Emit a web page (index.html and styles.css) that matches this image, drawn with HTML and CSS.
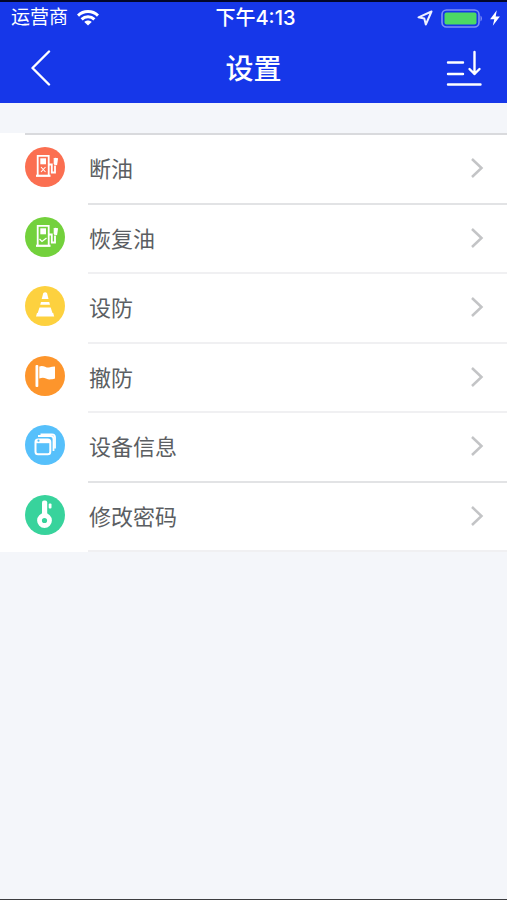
FILE: index.html
```html
<!DOCTYPE html>
<html lang="zh-CN">
<head>
<meta charset="utf-8">
<meta name="viewport" content="width=device-width, initial-scale=1">
<title>设置</title>
<link rel="stylesheet" href="styles.css">
</head>
<body>
<div class="screen">
  <header class="header">
    <div class="status">
      <div class="status-left">
        <span>运营商</span>
        <svg width="22" height="16" viewBox="0 0 22 16" fill="none" stroke="#fff" stroke-width="3" aria-hidden="true">
          <path d="M1 5.6C6.500 .2 15.500 .2 21 5.600"/>
          <path d="M4.600 9.400C8.200 5.900 13.800 5.900 17.400 9.400"/>
          <path d="M11 15.600L7.300 12C9.200 10 12.800 10 14.700 12Z" fill="#fff" stroke="none"/>
        </svg>
      </div>
      <span class="time">下午4:13</span>
      <div class="status-right">
        <svg width="16" height="16" viewBox="0 0 16 16" fill="none" stroke="#eef0ff" stroke-width="2" stroke-linejoin="round" aria-hidden="true"><path d="M14.500 1.500L1.500 7.300L7.300 8.600L8.800 14.500Z"/></svg>
        <svg width="41" height="19" viewBox="0 0 41 19" aria-hidden="true">
          <rect x="1" y="1" width="37" height="17" rx="4.500" fill="none" stroke="#7f8ff5" stroke-width="1.600"/>
          <rect x="3.500" y="3.500" width="32" height="12" rx="2" fill="#4cd964"/>
          <path d="M39.500 6.500Q41 7.500 41 9.500T39.500 12.500Z" fill="#7f8ff5"/>
        </svg>
        <svg width="10" height="16" viewBox="0 0 10 16" fill="#fff" aria-hidden="true"><path d="M6.800 .3L.1 9.300H4.300L2.800 15.700L9.900 6.400H5.700Z"/></svg>
      </div>
    </div>
    <div class="navbar">
      <button class="nav-button" type="button" aria-label="返回">
        <svg width="20" height="36" viewBox="0 0 20 36" fill="none" stroke="#fff" stroke-width="2.400" stroke-linecap="round" stroke-linejoin="round"><path d="M18 1.500L1.500 18L18 34.500"/></svg>
      </button>
      <h1 class="title">设置</h1>
      <button class="nav-button" type="button" aria-label="排序">
        <svg width="36" height="36" viewBox="0 0 36 36" fill="none" stroke="#fff" stroke-width="2.400" stroke-linecap="round" stroke-linejoin="round"><path d="M2 12.500H17M2 24H17M2 34.500H34.500M28.500 2V24M23.500 19L28.500 24L33.500 19"/></svg>
      </button>
    </div>
  </header>
  <main>
    <ul class="list">
      <li class="row"><a class="link" href="#">
        <svg class="icon" viewBox="0 0 40 40" aria-hidden="true">
          <circle cx="20" cy="20" r="20" fill="#fb6f51"/>
          <g fill="none" stroke="#fff" stroke-width="1.800"><path d="M12.700 28V8.800H23.700V28"/><path d="M11 28.800H25.500" stroke-width="2.200"/><path d="M24 17.500H26.800V25.500H30V18.500"/><path d="M29.300 11V17" stroke-width="1.200"/><path d="M31.500 11L30.500 18" stroke-width="3.200"/><path d="M16 20L20.500 25M20.500 20L16 25" stroke-width="1.100"/></g>
          <rect x="15.300" y="11.300" width="5.700" height="6" fill="#fff"/>
        </svg>
        <span class="label">断油</span>
        <svg class="chevron" viewBox="0 0 14 22" aria-hidden="true"><path d="M2 2L11.500 11L2 20"/></svg>
      </a></li>
      <li class="row"><a class="link" href="#">
        <svg class="icon" viewBox="0 0 40 40" aria-hidden="true">
          <circle cx="20" cy="20" r="20" fill="#73d13c"/>
          <g fill="none" stroke="#fff" stroke-width="1.800"><path d="M12.700 28V8.800H23.700V28"/><path d="M11 28.800H25.500" stroke-width="2.200"/><path d="M24 17.500H26.800V25.500H30V18.500"/><path d="M29.300 11V17" stroke-width="1.200"/><path d="M31.500 11L30.500 18" stroke-width="3.200"/><path d="M14.500 22L17 24.500L21.500 21" stroke-width="1.300"/></g>
          <rect x="15.300" y="11.300" width="5.700" height="6" fill="#fff"/>
        </svg>
        <span class="label">恢复油</span>
        <svg class="chevron" viewBox="0 0 14 22" aria-hidden="true"><path d="M2 2L11.500 11L2 20"/></svg>
      </a></li>
      <li class="row"><a class="link" href="#">
        <svg class="icon" viewBox="0 0 40 40" aria-hidden="true">
          <circle cx="20" cy="20" r="20" fill="#fdd13f"/>
          <g fill="#fff"><path d="M18.300 7Q20.200 5.600 22 7L23.500 13H16.700Z"/><path d="M16 16H24.200L25 18.700H15.200Z"/><path d="M14.500 21.500H25.700L27.500 27H12.700Z"/><path d="M12 27H28.200L29.200 30.500H11Z"/></g>
        </svg>
        <span class="label">设防</span>
        <svg class="chevron" viewBox="0 0 14 22" aria-hidden="true"><path d="M2 2L11.500 11L2 20"/></svg>
      </a></li>
      <li class="row"><a class="link" href="#">
        <svg class="icon" viewBox="0 0 40 40" aria-hidden="true">
          <circle cx="20" cy="20" r="20" fill="#fd952c"/>
          <g fill="#fff"><rect x="10.500" y="9" width="2.800" height="22" rx="1"/><path d="M14.300 10.500C18 8.500 21 12 24 11.500Q27 10.700 30 10.500V22.500C26 23.500 24 24 21 22.500Q18 21 14.300 22.500Z"/></g>
        </svg>
        <span class="label">撤防</span>
        <svg class="chevron" viewBox="0 0 14 22" aria-hidden="true"><path d="M2 2L11.500 11L2 20"/></svg>
      </a></li>
      <li class="row"><a class="link" href="#">
        <svg class="icon" viewBox="0 0 40 40" aria-hidden="true">
          <circle cx="20" cy="20" r="20" fill="#56c0fb"/>
          <g fill="none" stroke="#fff" stroke-width="2"><rect x="10.500" y="14.500" width="14.800" height="14.800" rx="2.500"/><path d="M10.500 16.500H25" stroke-width="3.400"/><path d="M13 11H25.500Q28.500 11 28.500 14V26" stroke-width="1.800"/><path d="M15.500 9.300H27Q30 9.300 30 12.300V23.500" stroke-width="1.800"/></g>
          <circle cx="13.500" cy="15.700" r="1.100" fill="#56c0fb"/>
        </svg>
        <span class="label">设备信息</span>
        <svg class="chevron" viewBox="0 0 14 22" aria-hidden="true"><path d="M2 2L11.500 11L2 20"/></svg>
      </a></li>
      <li class="row"><a class="link" href="#">
        <svg class="icon" viewBox="0 0 40 40" aria-hidden="true">
          <circle cx="20" cy="20" r="20" fill="#38d39c"/>
          <rect x="17" y="5.500" width="5.200" height="16" rx="2" fill="#fff"/><rect x="23.700" y="8.500" width="2.800" height="5" rx="1" fill="#fff"/>
          <circle cx="19.500" cy="25.500" r="5" fill="none" stroke="#fff" stroke-width="4.800"/>
        </svg>
        <span class="label">修改密码</span>
        <svg class="chevron" viewBox="0 0 14 22" aria-hidden="true"><path d="M2 2L11.500 11L2 20"/></svg>
      </a></li>
    </ul>
  </main>
</div>
</body>
</html>
```
FILE: styles.css
```css
* {
  box-sizing: border-box;
}

body {
  margin: 0;
  background: #f4f6fa;
  font-family: "Inter", "Noto Sans CJK SC", sans-serif;
}

.screen {
  min-height: 100vh;
  border-top: 2px solid #02062a;
  border-bottom: 1px solid #3c3d40;
}

.header {
  background: #1637e9;
  color: #fff;
}

.status {
  display: grid;
  grid-template-columns: 1fr auto 1fr;
  align-items: center;
  height: 32px;
  padding: 0 7px 0 11px;
  font-size: 19px;
  line-height: 32px;
}

.status-left,
.status-right {
  display: flex;
  align-items: center;
  gap: 9px;
}

.status-right {
  justify-content: flex-end;
  gap: 8px;
}

.time {
  font-size: 20px;
  font-weight: 500;
}

.navbar {
  display: grid;
  grid-template-columns: 1fr auto 1fr;
  align-items: center;
  height: 69px;
  padding: 0 14px 2px;
}

.nav-button {
  display: flex;
  align-items: center;
  justify-content: center;
  width: 54px;
  height: 44px;
  padding: 0;
  border: 0;
  background: none;
}

.nav-button:last-child {
  width: 58px;
  justify-self: end;
}

.title {
  margin: 0;
  padding-top: 2px;
  font-size: 28px;
  font-weight: 500;
  line-height: 40px;
}

.list {
  margin: 30px 0 0;
  padding: 0;
  list-style: none;
  background: linear-gradient(#d9dadd, #d9dadd) 25px 0 / 100% 2px no-repeat #fff;
}

.row {
  height: 70px;
}

.row:nth-child(even) {
  height: 69px;
}

.row:first-child {
  height: 72px;
  padding-top: 2px;
}

.link {
  display: grid;
  grid-template-columns: 40px 1fr 14px;
  column-gap: 24px;
  align-items: center;
  height: 100%;
  padding: 0 23px 2px 25px;
  background: linear-gradient(#f0f0f2, #f0f0f2) 88px 100% / 100% 2px no-repeat;
  color: #5b5e62;
  text-decoration: none;
}

.row:first-child .link,
.row:nth-child(5) .link {
  background-image: linear-gradient(#e2e3e5, #e2e3e5);
}

.icon {
  width: 40px;
  height: 40px;
  margin-bottom: 4px;
}

.label {
  font-size: 22px;
  line-height: 32px;
}

.chevron {
  width: 14px;
  height: 22px;
  margin-bottom: 2px;
  fill: none;
  stroke: #c3c4c6;
  stroke-width: 2.5;
}
```
